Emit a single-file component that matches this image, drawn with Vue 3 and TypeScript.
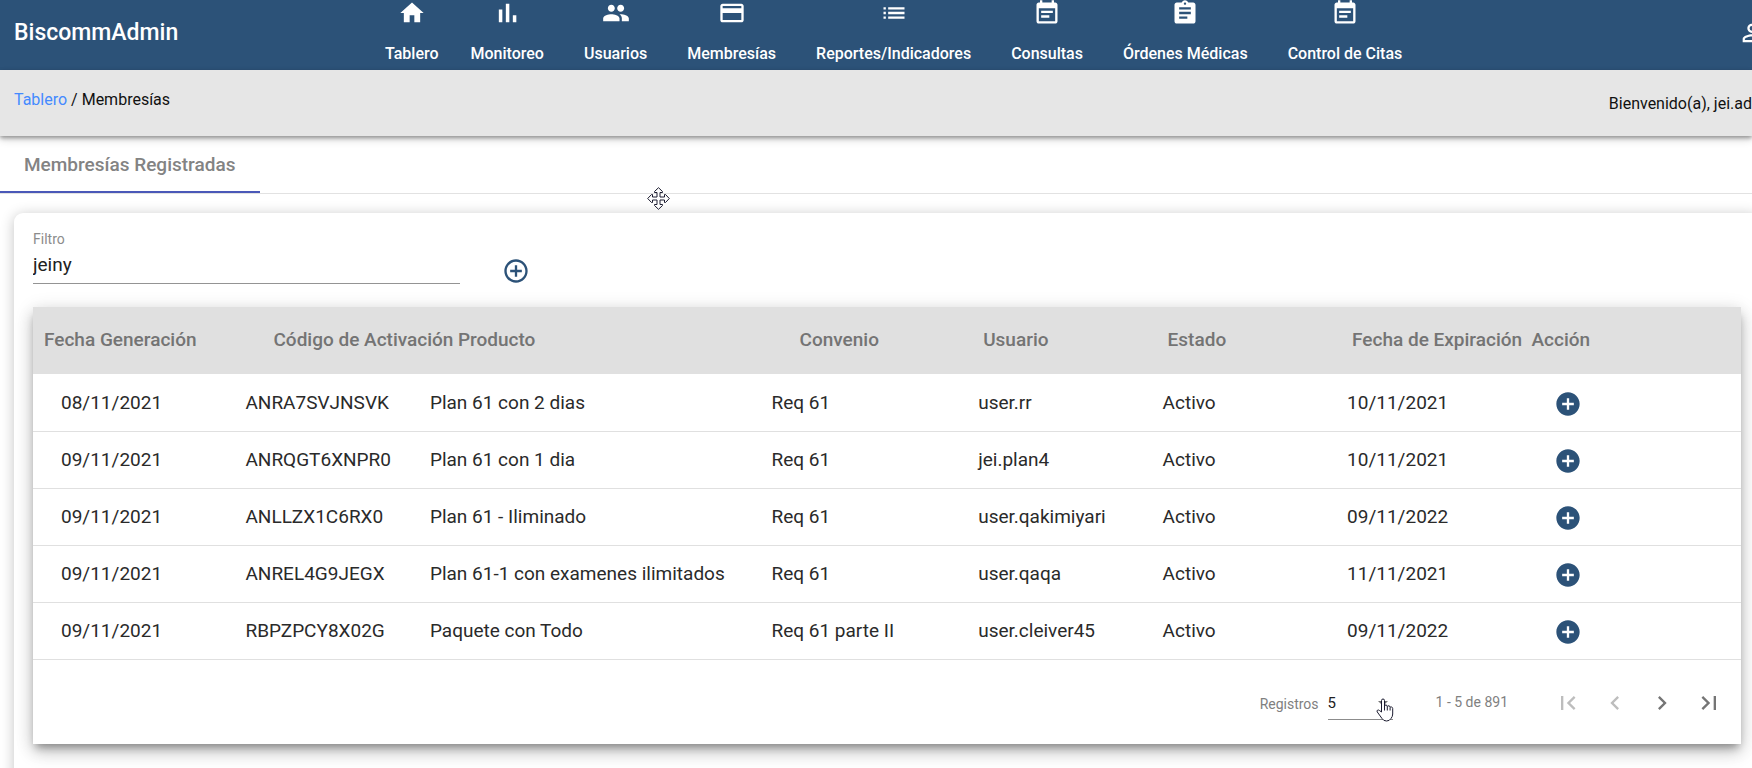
<script setup lang="ts">
import { ref } from 'vue'

interface NavItem { label: string; icon: string }
interface Row { fecha: string; codigo: string; producto: string; convenio: string; usuario: string; estado: string; expira: string }

const calendar = 'M19 3h-1V1h-2v2H8V1H6v2H5c-1.110 0-2 .9-2 2v14c0 1.100.89 2 2 2h14c1.100 0 2-.9 2-2V5c0-1.100-.9-2-2-2zm0 16H5V8h14v11zM7 10h10v2H7zm0 4h7v2H7z'

const nav: NavItem[] = [
  { label: 'Tablero', icon: 'M10 20v-6h4v6h5v-8h3L12 3 2 12h3v8z' },
  { label: 'Monitoreo', icon: 'M5 9h3v11H5zM17 14h3v6h-3zM11 4h3v16h-3z' },
  { label: 'Usuarios', icon: 'M16 11c1.660 0 2.990-1.340 2.990-3S17.660 5 16 5s-3 1.340-3 3 1.340 3 3 3zm-8 0c1.660 0 2.990-1.340 2.990-3S9.660 5 8 5 5 6.340 5 8s1.340 3 3 3zm0 2c-2.330 0-7 1.170-7 3.500V19h14v-2.500C15 14.170 10.330 13 8 13zm8 0c-.29 0-.62.02-.97.05 1.160.84 1.970 1.970 1.970 3.450V19h6v-2.500c0-2.330-4.670-3.500-7-3.500z' },
  { label: 'Membresías', icon: 'M20 4H4c-1.110 0-2 .89-2 2v12c0 1.110.89 2 2 2h16c1.110 0 2-.89 2-2V6c0-1.110-.89-2-2-2zm0 14H4v-6h16v6zm0-10H4V6h16v2z' },
  { label: 'Reportes/Indicadores', icon: 'M3 13h2v-2H3v2zm0 4h2v-2H3v2zm0-8h2V7H3v2zm4 4h14v-2H7v2zm0 4h14v-2H7v2zM7 7v2h14V7H7z' },
  { label: 'Consultas', icon: calendar },
  { label: 'Órdenes Médicas', icon: 'M19 3h-4.180C14.400 1.840 13.300 1 12 1s-2.400.84-2.820 2H5c-1.100 0-2 .9-2 2v14c0 1.100.9 2 2 2h14c1.100 0 2-.9 2-2V5c0-1.100-.9-2-2-2zm-7 0c.55 0 1 .45 1 1s-.45 1-1 1-1-.45-1-1 .45-1 1-1zm2 14H7v-2h7v2zm3-4H7v-2h10v2zm0-4H7V7h10v2z' },
  { label: 'Control de Citas', icon: calendar },
]

const headers = ['Fecha Generación', 'Código de Activación', 'Producto', 'Convenio', 'Usuario', 'Estado', 'Fecha de Expiración', 'Acción']

const rows: Row[] = [
  { fecha: '08/11/2021', codigo: 'ANRA7SVJNSVK', producto: 'Plan 61 con 2 dias', convenio: 'Req 61', usuario: 'user.rr', estado: 'Activo', expira: '10/11/2021' },
  { fecha: '09/11/2021', codigo: 'ANRQGT6XNPR0', producto: 'Plan 61 con 1 dia', convenio: 'Req 61', usuario: 'jei.plan4', estado: 'Activo', expira: '10/11/2021' },
  { fecha: '09/11/2021', codigo: 'ANLLZX1C6RX0', producto: 'Plan 61 - Iliminado', convenio: 'Req 61', usuario: 'user.qakimiyari', estado: 'Activo', expira: '09/11/2022' },
  { fecha: '09/11/2021', codigo: 'ANREL4G9JEGX', producto: 'Plan 61-1 con examenes ilimitados', convenio: 'Req 61', usuario: 'user.qaqa', estado: 'Activo', expira: '11/11/2021' },
  { fecha: '09/11/2021', codigo: 'RBPZPCY8X02G', producto: 'Paquete con Todo', convenio: 'Req 61 parte II', usuario: 'user.cleiver45', estado: 'Activo', expira: '09/11/2022' },
]

const pager = [
  { label: 'Primera página', icon: 'M18.410 16.590L13.820 12l4.590-4.590L17 6l-6 6 6 6zM6 6h2v12H6z', disabled: true },
  { label: 'Página anterior', icon: 'M15.410 7.410L14 6l-6 6 6 6 1.410-1.410L10.830 12z', disabled: true },
  { label: 'Página siguiente', icon: 'M10 6L8.590 7.410 13.170 12l-4.580 4.590L10 18l6-6z', disabled: false },
  { label: 'Última página', icon: 'M5.590 7.410L10.180 12l-4.590 4.590L7 18l6-6-6-6zM16 6h2v12h-2z', disabled: false },
]

const filtro = ref('jeiny')
const registros = ref('5')
</script>

<template>
  <div class="app">
    <header class="topbar">
      <div class="brand">BiscommAdmin</div>
      <nav class="nav">
        <a v-for="item in nav" :key="item.label" href="#" class="nav-item">
          <svg class="icon" viewBox="0 0 24 24" aria-hidden="true"><path :d="item.icon" /></svg>
          <span>{{ item.label }}</span>
        </a>
      </nav>
      <button class="user" type="button" aria-label="Usuario">
        <svg class="icon" viewBox="0 0 24 24" aria-hidden="true">
          <path d="M12 5.900a2.100 2.100 0 1 1 0 4.200 2.100 2.100 0 0 1 0-4.200m0 9c2.970 0 6.100 1.460 6.100 2.100v1.100H5.900V17c0-.64 3.130-2.100 6.100-2.100M12 4C9.790 4 8 5.790 8 8s1.790 4 4 4 4-1.790 4-4-1.790-4-4-4zm0 9c-2.670 0-8 1.340-8 4v3h16v-3c0-2.660-5.330-4-8-4z" />
        </svg>
      </button>
    </header>

    <div class="subbar">
      <div class="crumbs"><a href="#">Tablero</a> / Membresías</div>
      <div class="welcome">Bienvenido(a), jei.ad</div>
    </div>

    <div class="tabs" role="tablist">
      <button class="tab" type="button" role="tab" aria-selected="true">Membresías Registradas</button>
      <svg class="move-cursor" viewBox="0 0 23 23" aria-hidden="true">
        <path d="M11.500.7L15.500 4.500V5.500H13V10H17.500V7.500H18.500L22.300 11.500 18.500 15.500H17.500V13H13V17.500H15.500V18.500L11.500 22.300 7.500 18.500V17.500H10V13H5.500V15.500H4.500L.7 11.500 4.500 7.500H5.500V10H10V5.500H7.500V4.500Z" />
      </svg>
    </div>

    <main class="card">
      <div class="filter-row">
        <div class="field">
          <label for="filtro">Filtro</label>
          <input id="filtro" v-model="filtro" type="text" />
        </div>
        <button class="add" type="button" aria-label="Agregar">
          <svg class="icon" viewBox="0 0 24 24" aria-hidden="true">
            <path d="M13 7h-2v4H7v2h4v4h2v-4h4v-2h-4V7zm-1-5C6.480 2 2 6.480 2 12s4.480 10 10 10 10-4.480 10-10S17.520 2 12 2zm0 18c-4.410 0-8-3.590-8-8s3.590-8 8-8 8 3.590 8 8-3.590 8-8 8z" />
          </svg>
        </button>
      </div>

      <section class="panel">
        <table>
          <colgroup>
            <col class="c-date" /><col class="c-date" /><col class="c-product" /><col class="c-deal" />
            <col class="c-date" /><col class="c-date" /><col class="c-date" /><col />
          </colgroup>
          <thead>
            <tr><th v-for="h in headers" :key="h" scope="col">{{ h }}</th></tr>
          </thead>
          <tbody>
            <tr v-for="r in rows" :key="r.codigo">
              <td>{{ r.fecha }}</td>
              <td>{{ r.codigo }}</td>
              <td>{{ r.producto }}</td>
              <td>{{ r.convenio }}</td>
              <td>{{ r.usuario }}</td>
              <td>{{ r.estado }}</td>
              <td>{{ r.expira }}</td>
              <td class="action">
                <button type="button" :aria-label="'Ver ' + r.codigo">
                  <svg class="icon" viewBox="0 0 24 24" aria-hidden="true">
                    <path d="M12 2C6.480 2 2 6.480 2 12s4.480 10 10 10 10-4.480 10-10S17.520 2 12 2zm5 11h-4v4h-2v-4H7v-2h4V7h2v4h4v2z" />
                  </svg>
                </button>
              </td>
            </tr>
          </tbody>
        </table>

        <footer class="paginator">
          <label for="registros">Registros</label>
          <div class="select">
            <select id="registros" v-model="registros">
              <option>5</option>
            </select>
            <svg class="arrow" viewBox="0 0 10 5" aria-hidden="true"><path d="M0 0h10L5 5z" /></svg>
            <svg class="hand-cursor" viewBox="0 0 18 24" aria-hidden="true">
              <path d="M5.500 14V2.500Q5.500 1 7 1T8.500 2.500V8Q8.700 6.800 10 7T11.300 8.500Q11.700 7.500 13 7.900T14.100 9.400Q14.600 8.700 15.600 9T16.700 10.500V16Q16.700 18.500 15 20.500 13.500 23 10.500 23 7.500 23 6 20.500L1.300 14Q.5 12.800 1.500 12.200T3.600 12.600L5.500 14Z" />
              <path d="M8.500 7.500V12.500M11.300 8.500V12.500M14.100 9.500V12.500" />
            </svg>
          </div>
          <span class="range">1 - 5 de 891</span>
          <div class="pages">
            <button v-for="p in pager" :key="p.label" type="button" :aria-label="p.label" :disabled="p.disabled">
              <svg class="icon" viewBox="0 0 24 24" aria-hidden="true"><path :d="p.icon" /></svg>
            </button>
          </div>
        </footer>
      </section>
    </main>
  </div>
</template>

<style>
body { margin: 0; background: #fff; }
</style>

<style scoped>
.app {
  min-height: 100vh;
  overflow: hidden;
  font-family: Roboto, "Liberation Sans", sans-serif;
  font-size: 16px;
  color: #212121;
  display: flex;
  flex-direction: column;
}
* { box-sizing: border-box; }
a { color: inherit; text-decoration: none; }
button { border: 0; padding: 0; background: none; color: inherit; font: inherit; }
.icon { display: block; width: 28px; height: 28px; fill: currentColor; }

.topbar {
  height: 70px;
  flex: none;
  display: flex;
  align-items: center;
  background: #2c5278;
  color: #fff;
  font-weight: 500;
}
.brand { width: 371px; padding: 0 0 4px 14px; font-size: 23px; line-height: 28px; }
.nav { display: flex; gap: 40px; padding-left: 14px; }
.nav-item { display: flex; flex-direction: column; align-items: center; gap: 17px; line-height: 20px; white-space: nowrap; margin-bottom: 8px; }
.nav-item:first-child { margin-right: -8px; }
.user { margin: 0 -14px 0 auto; padding-bottom: 4px; }

.subbar {
  position: relative;
  height: 66px;
  flex: none;
  display: flex;
  justify-content: space-between;
  background: #e6e6e6;
  color: #111;
  line-height: 20px;
  box-shadow: 0 2px 4px rgba(0, 0, 0, .35), 0 4px 8px rgba(0, 0, 0, .14);
}
.crumbs { padding: 20px 0 0 14px; }
.crumbs a { color: #448aff; }
.welcome { padding-top: 24px; white-space: nowrap; }

.tabs { position: relative; flex: none; display: flex; border-bottom: 1px solid #e2e2e2; height: 58px; }
.tab { padding: 2px 25px 0 24px; border-bottom: 2px solid #4a58b8; color: #838383; font-size: 19px; font-weight: 500; }
.move-cursor { position: absolute; left: 647px; top: 51px; width: 23px; height: 23px; fill: #fff; stroke: #1c1c30; stroke-width: 1; z-index: 2; }

.card {
  flex: 1;
  margin: 19px -8px -16px 14px;
  padding: 19px 19px 44px;
  border-radius: 9px;
  background: #fff;
  box-shadow: 0 2px 14px rgba(0, 0, 0, .24);
}
.filter-row { display: flex; align-items: flex-start; }
.field { width: 25%; display: flex; flex-direction: column; }
.field label { font-size: 14px; line-height: 14px; color: #8c8c8c; }
.field input { height: 38px; padding: 0; border: 0; border-bottom: 1px solid #949494; background: none; font: 19px Roboto, "Liberation Sans", sans-serif; color: #212121; outline: 0; }
.add { margin: 25px 0 0 42px; color: #2c5278; }

.panel {
  margin-top: 22px;
  background: #fff;
  box-shadow: 0 6px 8px -3px rgba(0, 0, 0, .32), 0 9px 16px rgba(0, 0, 0, .16), 0 3px 18px rgba(0, 0, 0, .14);
}
table { width: 100%; table-layout: fixed; border-collapse: collapse; }
.c-date { width: 10.8%; }
.c-product { width: 20%; }
.c-deal { width: 12.1%; }
th, td { text-align: left; white-space: nowrap; padding: 0 0 0 28px; font-size: 19px; }
th { height: 67px; padding-bottom: 2px; background: #e0e0e0; color: #747474; font-weight: 500; }
th:nth-child(1) { padding-left: 11px; }
th:nth-child(2), th:nth-child(3), th:nth-child(4) { padding-left: 56px; }
th:nth-child(5), th:nth-child(6), th:nth-child(7) { padding-left: 33px; }
td { height: 57px; border-bottom: 1px solid #e0e0e0; color: #2a2a2a; }
.action { padding-left: 50px; }
.action button { display: block; margin-top: 3px; color: #2c5278; }

.paginator { height: 84px; display: flex; align-items: center; justify-content: flex-end; padding-right: 18px; font-size: 14px; line-height: 20px; color: #808080; }
.paginator label { padding-top: 4px; }
.select { position: relative; width: 65px; margin-left: 9px; padding-top: 3px; }
.select select { width: 100%; height: 32px; margin-top: 2px; padding: 0 0 2px; border: 0; border-bottom: 1px solid #8c8c8c; background: none; appearance: none; font: 15px Roboto, "Liberation Sans", sans-serif; color: #212121; }
.arrow { position: absolute; right: 5px; top: 18px; width: 10px; height: 5px; fill: #757575; }
.hand-cursor { position: absolute; left: 48px; top: 15px; width: 18px; height: 24px; fill: #fff; stroke: #1c1c30; stroke-width: 1; }
.range { margin: 0 46px 0 43px; }
.pages { display: flex; gap: 19px; padding-top: 2px; }
.pages button { color: #757575; }
.pages button:disabled { color: #bdbdbd; }
</style>
